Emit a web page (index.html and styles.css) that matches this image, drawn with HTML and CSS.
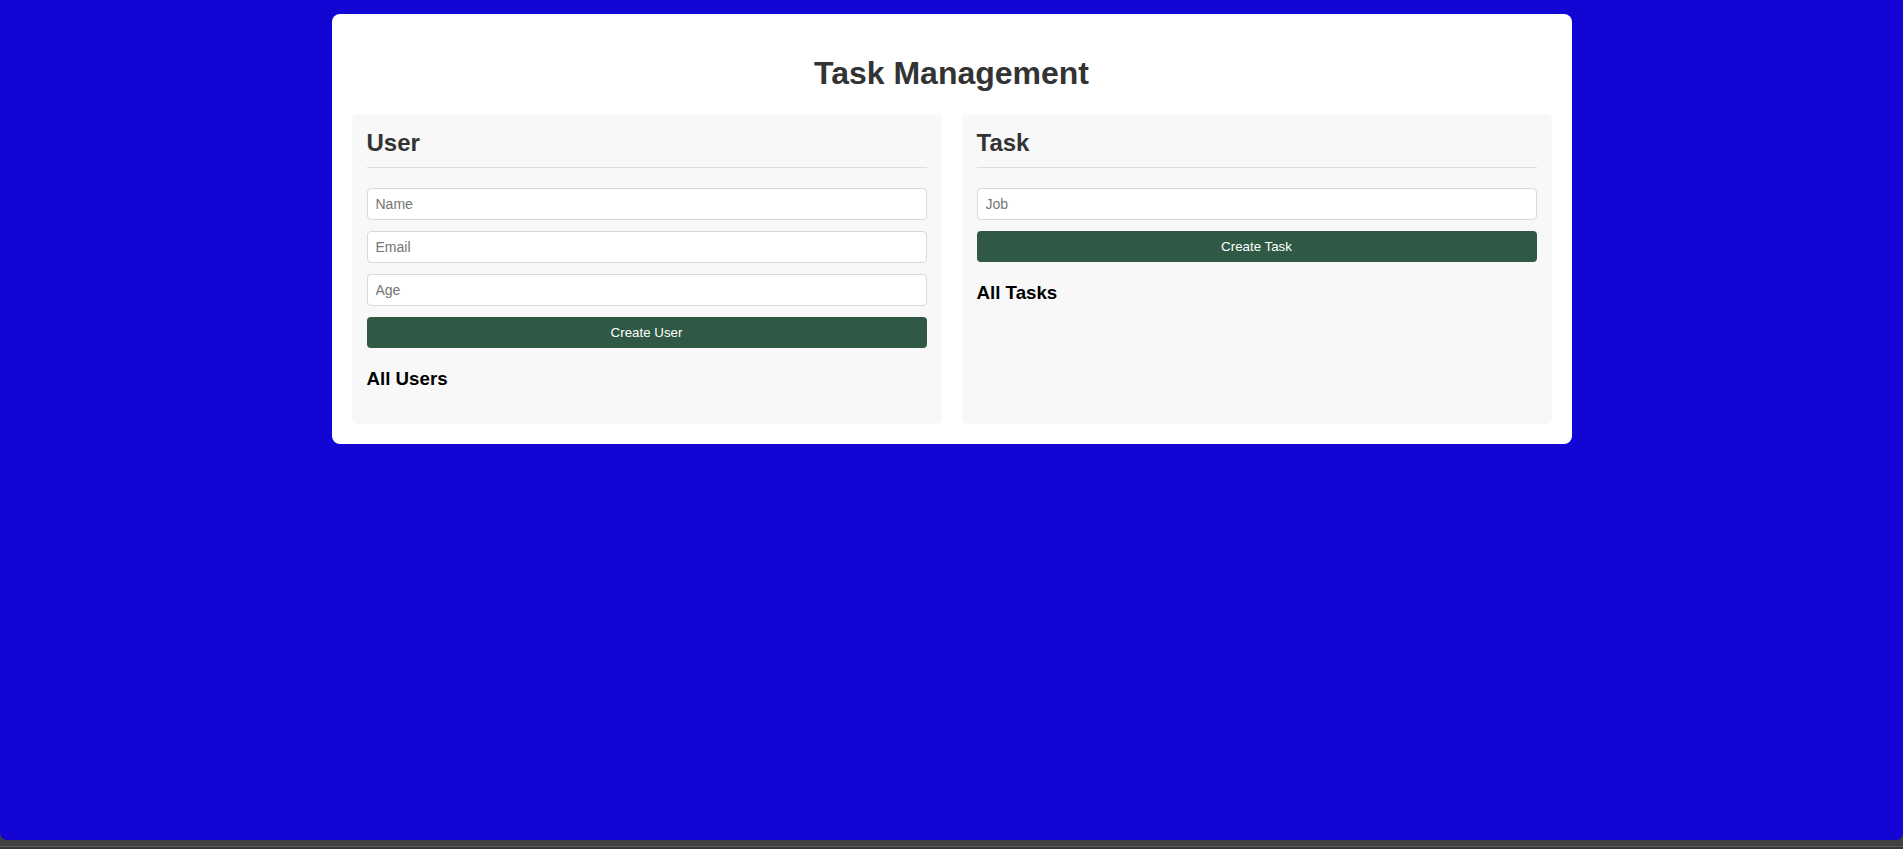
FILE: index.html
```html
<!DOCTYPE html>
<html lang="en">
<head>
<meta charset="utf-8">
<title>Task Management</title>
<link rel="stylesheet" href="styles.css">
</head>
<body>
<div class="page">
  <div class="container">
    <h1 class="title">Task Management</h1>
    <div class="columns">
      <section class="panel">
        <h2 class="panel-title">User</h2>
        <input class="field" type="text" placeholder="Name">
        <input class="field" type="email" placeholder="Email">
        <input class="field" type="number" placeholder="Age">
        <button class="btn" type="button">Create User</button>
        <h3 class="list-title">All Users</h3>
        <div class="list"></div>
      </section>
      <section class="panel">
        <h2 class="panel-title">Task</h2>
        <input class="field" type="text" placeholder="Job">
        <button class="btn" type="button">Create Task</button>
        <h3 class="list-title">All Tasks</h3>
        <div class="list"></div>
      </section>
    </div>
  </div>
</div>
<div class="strip"></div>
</body>
</html>
```

FILE: styles.css
```css
html, body {
  margin: 0;
  padding: 0;
}

body {
  background: #3f3f3f;
  font-family: "Liberation Sans", Arial, sans-serif;
}

.page {
  height: 840px;
  box-sizing: border-box;
  padding-top: 14px;
  background: #1306d5;
  border-radius: 0 0 7px 7px;
}

.strip {
  height: 9px;
  background: linear-gradient(to bottom, #414141 0, #414141 6px, #5b5b5b 6px, #5b5b5b 7px, #383838 7px);
}

.container {
  width: 1240px;
  box-sizing: border-box;
  margin: 0 auto;
  padding: 20px;
  background: #ffffff;
  border-radius: 8px;
}

.title {
  margin: 21.44px 0;
  font-size: 32px;
  font-weight: bold;
  text-align: center;
  color: #333333;
}

.columns {
  display: grid;
  grid-template-columns: 1fr 1fr;
  gap: 20px;
}

.panel {
  display: flex;
  flex-direction: column;
  padding: 15px;
  background: #f8f8f8;
  border-radius: 5px;
}

.panel-title {
  margin: 0 0 20px;
  padding: 0 0 10px;
  font-size: 24px;
  font-weight: bold;
  color: #333333;
  border-bottom: 1px solid #dddddd;
}

.field {
  display: block;
  height: 32px;
  box-sizing: border-box;
  margin: 0 0 11px;
  padding: 0 8px;
  font-family: "Liberation Sans", Arial, sans-serif;
  font-size: 14px;
  color: #333333;
  background: #ffffff;
  border: 1px solid #d9d9d9;
  border-radius: 4px;
  outline: none;
}

.field::placeholder {
  color: #757575;
}

.btn {
  display: block;
  height: 31px;
  margin: 0;
  padding: 0;
  font-family: "Liberation Sans", Arial, sans-serif;
  font-size: 13.33px;
  color: #ffffff;
  background: #2f5944;
  border: 0 none;
  border-radius: 4px;
  cursor: pointer;
}

.list-title {
  margin: 20px 0 18.72px;
  font-size: 18.72px;
  font-weight: bold;
  color: #000000;
}
```
